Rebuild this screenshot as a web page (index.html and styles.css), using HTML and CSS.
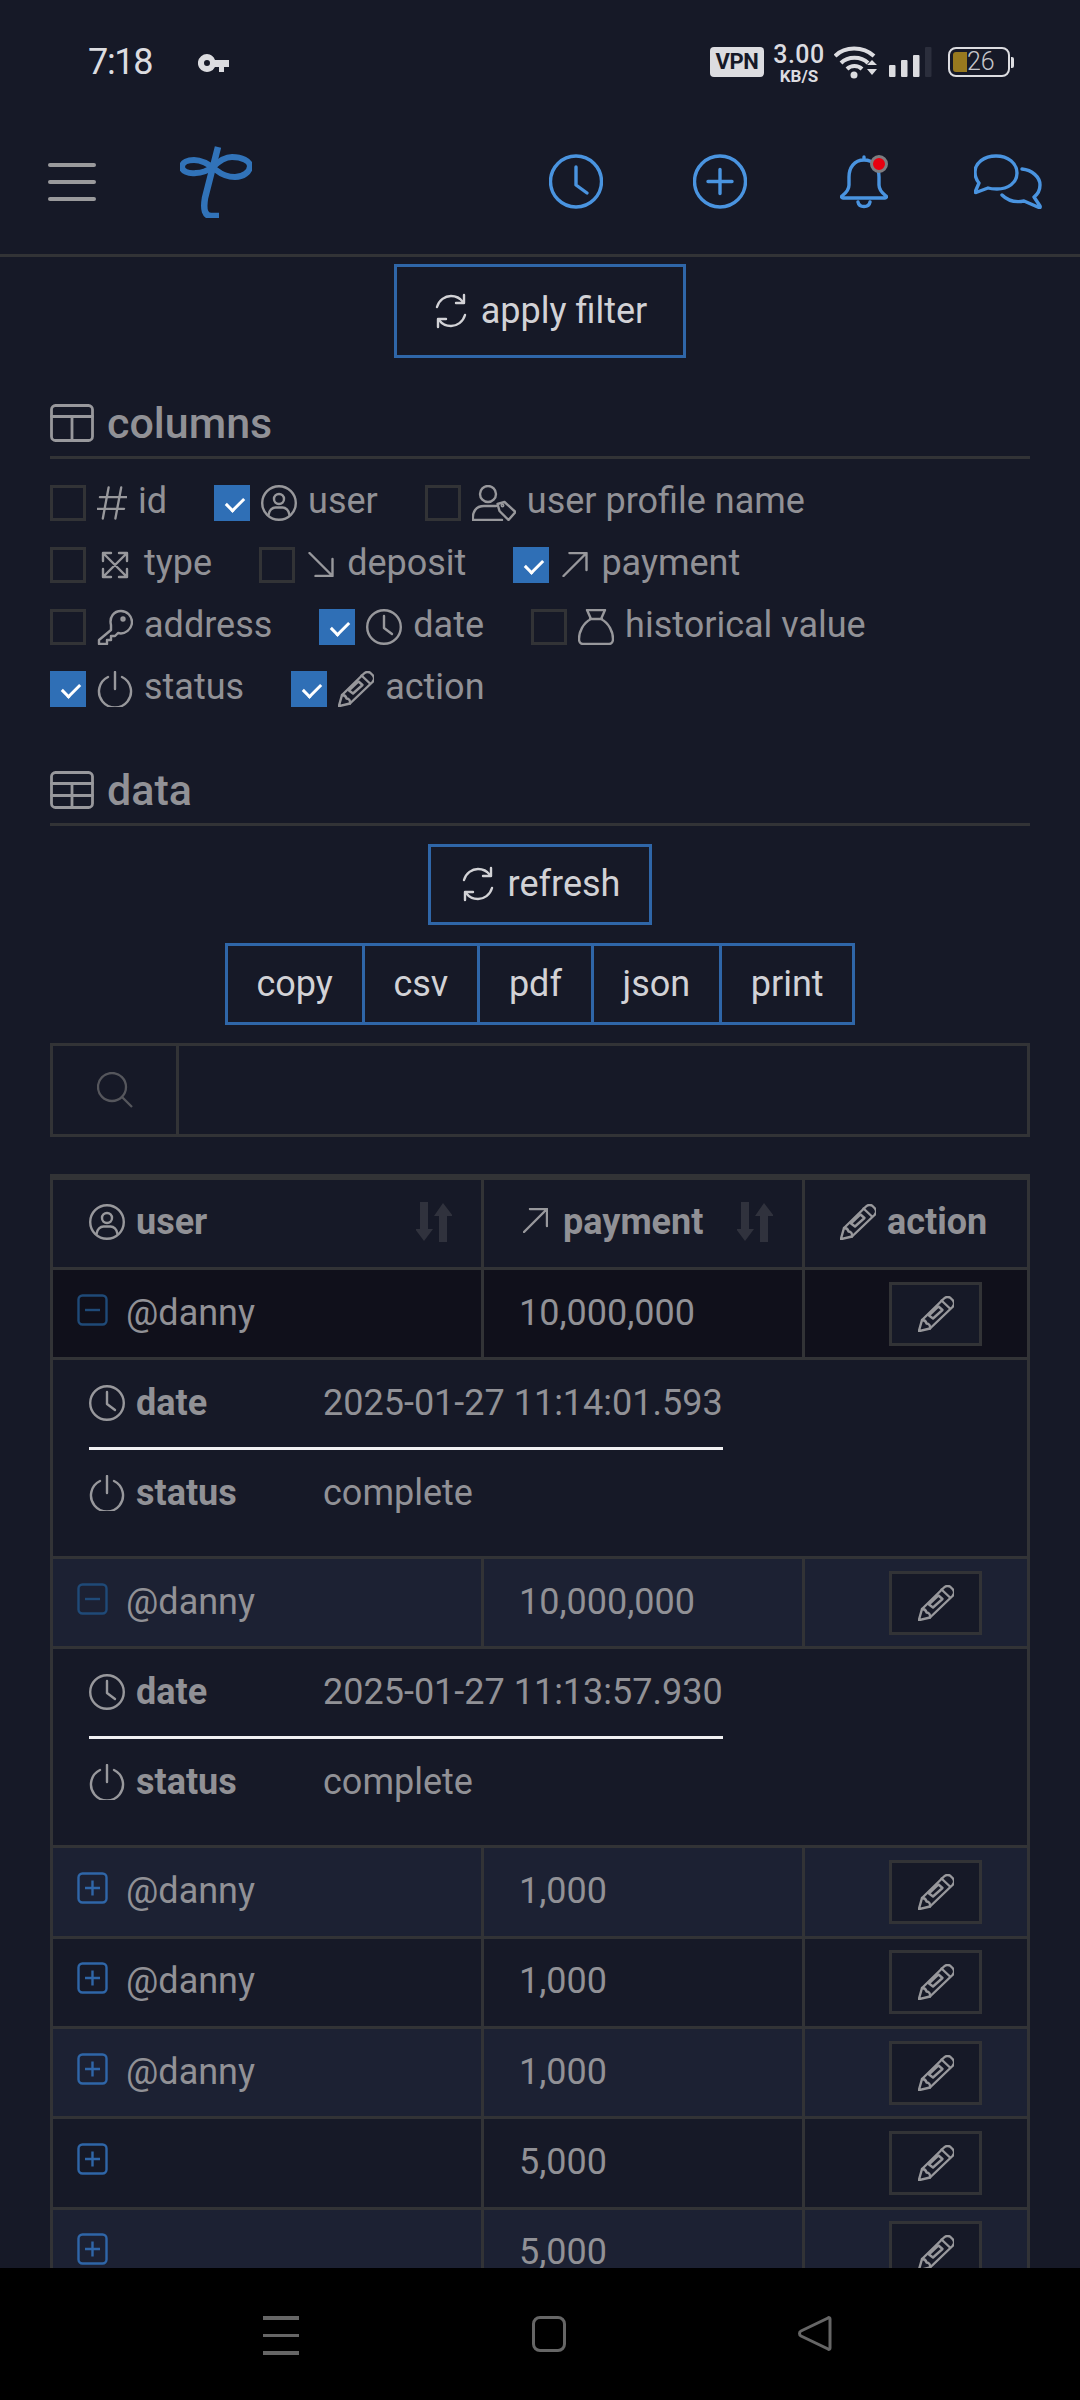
FILE: index.html
```html
<!DOCTYPE html>
<html lang="en">
<head>
<meta charset="utf-8">
<title>payments</title>
<link rel="stylesheet" href="styles.css">
</head>
<body>
<svg class="sprite" xmlns="http://www.w3.org/2000/svg">
  <symbol id="i-refresh" viewBox="0 0 36 36"><path d="M4 14C6 7 12 3 18 3c5 0 9 2 12 6M32 22c-2 7-8 11-14 11-5 0-9-2-12-6"/><path d="M31 2v8h-8M5 34v-8h8"/></symbol>
  <symbol id="i-columns" viewBox="0 0 44 38"><rect x="1.5" y="1.5" width="41" height="35" rx="4"/><path d="M1.5 12.5h41M22 12.5v24"/></symbol>
  <symbol id="i-data" viewBox="0 0 44 38"><rect x="1.5" y="1.5" width="41" height="35" rx="4"/><path d="M1.5 12.5h41M1.5 24.5h41M22 12.5v24"/></symbol>
  <symbol id="i-hash" viewBox="0 0 31 36"><path d="M12 2 6 34M25 2l-6 32M3 12h28M0 24h28"/></symbol>
  <symbol id="i-user" viewBox="0 0 36 36"><circle cx="18" cy="18" r="16.8"/><circle cx="18" cy="14" r="5"/><path d="M7.5 30c.5-5 4-7.5 7-7.5h7c3 0 6.500 2.500 7 7.500"/></symbol>
  <symbol id="i-usertag" viewBox="0 0 44 36"><circle cx="16" cy="9" r="8"/><path d="M1 35c-1-8 3-14 11-14h12M1 35h29"/><path d="M25.500 19l7-2 11 10-7 8-9-9z"/><circle cx="30.500" cy="20.500" r=".8"/></symbol>
  <symbol id="i-expand" viewBox="0 0 28 28"><path d="M2 10V2h8M18 2h8v8M26 18v8h-8M10 26H2v-8M2 2l24 24M26 2 2 26"/></symbol>
  <symbol id="i-down" viewBox="0 0 25 25"><path d="M1 1l23 23M24 7v17H7"/></symbol>
  <symbol id="i-up" viewBox="0 0 25 25"><path d="M1 24 24 1M7 1h17v17"/></symbol>
  <symbol id="i-key" viewBox="0 0 36 36"><path d="M14 21l-12 10v4h8v-4h4v-4h4l3-3c7 2 14-4 14-11 0-6-5-11-11-11-7 0-12 6-10 14z"/><circle cx="26" cy="10" r="1.500"/></symbol>
  <symbol id="i-clock" viewBox="0 0 36 36"><circle cx="18" cy="18" r="16.800"/><path d="M18 7v12l8 6"/></symbol>
  <symbol id="i-sack" viewBox="0 0 36 36"><path d="M9 1h18l-4 9c8 4 12 13 12 20 0 3-2 5-4 5H5c-2 0-4-2-4-5 0-7 4-16 12-20zM12 10h12"/></symbol>
  <symbol id="i-power" viewBox="0 0 36 36"><path d="M11 6a16 16 0 1 0 14 0M18 1v17"/></symbol>
  <symbol id="i-pencil" viewBox="0 0 36 36"><path d="M.8 35.200 4 24 26 2.500c2-2 5-2 6.500-.5L35 4.500c1.500 2 1.500 4.500-.5 6.500L12 32.500z"/><path d="M23.500 4.500 32 12.500"/><path d="M11 19.500 20.500 10.500l4 3.500-9.500 8.500z"/><path d="M4 24c3 0 4 1 4.500 3.500 2.500 0 4 2 3.500 5"/></symbol>
  <symbol id="i-sort" viewBox="0 0 36 40"><path class="sort-a" d="M4 0h8v27h5L8 39-1 27h5z"/><path class="sort-b" d="M23 40h8V14h6L27 1 18 14h5z"/></symbol>
  <symbol id="i-minus" viewBox="0 0 31 32"><rect x="1.500" y="1.500" width="28" height="29" rx="4"/><path d="M8 16h15"/></symbol>
  <symbol id="i-plus" viewBox="0 0 31 32"><rect x="1.500" y="1.500" width="28" height="29" rx="4"/><path d="M8 16h15M15.500 8.500v15"/></symbol>
</svg>

<div class="screen">
  <div class="statusbar">
    <span class="time">7:18</span>
    <svg class="key" width="32" height="20" viewBox="0 0 32 20"><path d="M9 1a9 9 0 1 0 8 13h4v5h5v-5h5V7H17A9 9 0 0 0 9 1zm0 6a3 3 0 1 1 0 6 3 3 0 0 1 0-6z" fill-rule="evenodd"/></svg>
    <div class="status-right">
      <span class="vpn">VPN</span>
      <span class="speed"><span class="speed-num">3.00</span><span class="speed-unit">KB/S</span></span>
      <svg class="wifi" width="44" height="34" viewBox="0 0 44 34"><path d="M1 11c10-10 28-10 39 0M7 18c7-7 20-7 27 0M13 24c4-4 11-4 15 0"/><circle class="solid" cx="20" cy="30" r="3.500"/><path class="solid" d="M33 20l5-5 5 5zM33 24h10l-5 6z"/></svg>
      <svg class="signal" width="44" height="30" viewBox="0 0 44 30"><rect class="bar" x="0" y="18" width="6.500" height="12" rx="1"/><rect class="bar" x="12" y="13" width="6.500" height="17" rx="1"/><rect class="bar" x="24" y="8" width="6.500" height="22" rx="1"/><rect class="bar-off" x="36" y="0" width="6.500" height="30" rx="1"/></svg>
      <div class="battery"><span class="battery-fill"></span><span class="battery-num">26</span></div>
      <span class="battery-tip"></span>
    </div>
  </div>

  <nav class="navbar">
    <div class="slot"><span class="burger"><i></i><i></i><i></i></span></div>
    <div class="slot">
      <svg class="logo" width="72" height="72" viewBox="0 0 72 72"><path d="M2 21C2 16 8 14 14 14 23 14 30 19 36 24 41 28 48 31 55 31 63 31 70 26 70 20 70 15 62 11 52 11 44 11 38 16 33 21 27 25 22 27 16 27 8 28 2 25 2 21z"/><path class="logo-stem" d="M38 1 25 52c-2 12 0 18 6 18h8"/></svg>
    </div>
    <div class="nav-spacer"></div>
    <div class="slot"><svg class="nav-ico" width="54" height="55" viewBox="0 0 54 55"><circle cx="27" cy="27.500" r="25.500"/><path d="M27 13v18l11 8"/></svg></div>
    <div class="slot"><svg class="nav-ico" width="54" height="55" viewBox="0 0 54 55"><circle cx="27" cy="27.500" r="25.500"/><path d="M15 27.500h24M27 15.500v24"/></svg></div>
    <div class="slot bell-slot">
      <svg class="nav-ico" width="48" height="54" viewBox="0 0 48 54"><path d="M24 5C14 5 9 13 9 22v8c0 5-3 8-7 11-1 1 0 2 1 2h42c1 0 2-1 1-2-4-3-7-6-7-11v-8c0-9-5-17-15-17zM24 2v3M18 47c1 6 11 6 12 0"/></svg>
      <span class="dot"></span>
    </div>
    <div class="slot"><svg class="nav-ico" width="68" height="55" viewBox="0 0 68 55"><path d="M5 29C2.500 26 1 22 1 18 1 9 10 2 22 2s21 7 21 17-9 16-20 16c-3 0-6 0-9-1L2 38.500c-1 0-1-1-.5-1.500z"/><path d="M48 15c10 1 18 8 18 16 0 5-2 9-6 12l6 9c.5 1 0 2-1 1.500L50 47c-10 2-17-1-22-6"/></svg></div>
  </nav>

  <main class="content">
    <div class="center-row">
      <button class="btn btn-filter"><svg class="ico" width="36" height="36"><use href="#i-refresh"/></svg>apply filter</button>
    </div>

    <h2 class="head head-columns"><svg class="ico" width="44" height="38"><use href="#i-columns"/></svg>columns</h2>
    <div class="checks">
      <div class="check-row">
        <label class="check"><span class="box"></span><svg class="ico" width="30" height="36"><use href="#i-hash"/></svg>id</label>
        <label class="check"><span class="box on"></span><svg class="ico" width="36" height="36"><use href="#i-user"/></svg>user</label>
        <label class="check"><span class="box"></span><svg class="ico" width="44" height="36"><use href="#i-usertag"/></svg>user profile name</label>
      </div>
      <div class="check-row">
        <label class="check"><span class="box"></span><svg class="ico" width="36" height="28"><use href="#i-expand"/></svg>type</label>
        <label class="check"><span class="box"></span><svg class="ico" width="30" height="25"><use href="#i-down"/></svg>deposit</label>
        <label class="check"><span class="box on"></span><svg class="ico" width="30" height="25"><use href="#i-up"/></svg>payment</label>
      </div>
      <div class="check-row">
        <label class="check"><span class="box"></span><svg class="ico" width="36" height="36"><use href="#i-key"/></svg>address</label>
        <label class="check"><span class="box on"></span><svg class="ico" width="36" height="36"><use href="#i-clock"/></svg>date</label>
        <label class="check"><span class="box"></span><svg class="ico" width="36" height="36"><use href="#i-sack"/></svg>historical value</label>
      </div>
      <div class="check-row">
        <label class="check"><span class="box on"></span><svg class="ico" width="36" height="36"><use href="#i-power"/></svg>status</label>
        <label class="check"><span class="box on"></span><svg class="ico" width="36" height="36"><use href="#i-pencil"/></svg>action</label>
      </div>
    </div>

    <h2 class="head"><svg class="ico" width="44" height="38"><use href="#i-data"/></svg>data</h2>
    <div class="center-row">
      <button class="btn btn-refresh"><svg class="ico" width="36" height="36"><use href="#i-refresh"/></svg>refresh</button>
    </div>
    <div class="center-row">
      <div class="btn-group">
        <button class="seg">copy</button><button class="seg">csv</button><button class="seg">pdf</button><button class="seg">json</button><button class="seg">print</button>
      </div>
    </div>

    <div class="search">
      <span class="search-ico"><svg width="36" height="36" viewBox="0 0 36 36"><circle cx="15" cy="15" r="14"/><path d="M25 25l10 10"/></svg></span>
      <span class="search-input"></span>
    </div>

    <div class="table">
      <div class="row row-head">
        <div class="cell th"><svg class="ico" width="36" height="36"><use href="#i-user"/></svg>user<svg class="sort" width="36" height="40"><use href="#i-sort"/></svg></div>
        <div class="cell th"><svg class="ico ico-arrow" width="25" height="25"><use href="#i-up"/></svg>payment<svg class="sort" width="36" height="40"><use href="#i-sort"/></svg></div>
        <div class="cell th"><svg class="ico" width="36" height="36"><use href="#i-pencil"/></svg>action</div>
      </div>

      <div class="row row-active">
        <div class="cell"><svg class="exp exp-dim" width="31" height="32"><use href="#i-minus"/></svg>@danny</div>
        <div class="cell">10,000,000</div>
        <div class="cell cell-act"><span class="edit"><svg class="ico" width="36" height="36"><use href="#i-pencil"/></svg></span></div>
      </div>
      <div class="detail">
        <div class="d-row d-first"><span class="d-label"><svg class="ico" width="36" height="36"><use href="#i-clock"/></svg>date</span><span>2025-01-27 11:14:01.593</span></div>
        <div class="d-row"><span class="d-label"><svg class="ico" width="36" height="36"><use href="#i-power"/></svg>status</span><span>complete</span></div>
      </div>

      <div class="row row-alt">
        <div class="cell"><svg class="exp exp-dim" width="31" height="32"><use href="#i-minus"/></svg>@danny</div>
        <div class="cell">10,000,000</div>
        <div class="cell cell-act"><span class="edit"><svg class="ico" width="36" height="36"><use href="#i-pencil"/></svg></span></div>
      </div>
      <div class="detail">
        <div class="d-row d-first"><span class="d-label"><svg class="ico" width="36" height="36"><use href="#i-clock"/></svg>date</span><span>2025-01-27 11:13:57.930</span></div>
        <div class="d-row"><span class="d-label"><svg class="ico" width="36" height="36"><use href="#i-power"/></svg>status</span><span>complete</span></div>
      </div>

      <div class="row row-alt">
        <div class="cell"><svg class="exp" width="31" height="32"><use href="#i-plus"/></svg>@danny</div>
        <div class="cell">1,000</div>
        <div class="cell cell-act"><span class="edit"><svg class="ico" width="36" height="36"><use href="#i-pencil"/></svg></span></div>
      </div>
      <div class="row">
        <div class="cell"><svg class="exp" width="31" height="32"><use href="#i-plus"/></svg>@danny</div>
        <div class="cell">1,000</div>
        <div class="cell cell-act"><span class="edit"><svg class="ico" width="36" height="36"><use href="#i-pencil"/></svg></span></div>
      </div>
      <div class="row row-alt">
        <div class="cell"><svg class="exp" width="31" height="32"><use href="#i-plus"/></svg>@danny</div>
        <div class="cell">1,000</div>
        <div class="cell cell-act"><span class="edit"><svg class="ico" width="36" height="36"><use href="#i-pencil"/></svg></span></div>
      </div>
      <div class="row">
        <div class="cell"><svg class="exp" width="31" height="32"><use href="#i-plus"/></svg></div>
        <div class="cell">5,000</div>
        <div class="cell cell-act"><span class="edit"><svg class="ico" width="36" height="36"><use href="#i-pencil"/></svg></span></div>
      </div>
      <div class="row row-alt">
        <div class="cell"><svg class="exp" width="31" height="32"><use href="#i-plus"/></svg></div>
        <div class="cell">5,000</div>
        <div class="cell cell-act"><span class="edit"><svg class="ico" width="36" height="36"><use href="#i-pencil"/></svg></span></div>
      </div>
    </div>
  </main>

  <footer class="sysnav">
    <span class="sys-menu"><i></i><i></i><i></i></span>
    <span class="sys-home"></span>
    <svg class="sys-back" width="34" height="35" viewBox="0 0 34 35"><path d="M32 3c0-1-1-2-2-1L3 15c-2 1-2 4 0 5l27 13c1 1 2 0 2-1z"/></svg>
  </footer>
</div>
</body>
</html>
```

FILE: styles.css
```css
* { box-sizing: border-box; }
html, body { margin: 0; padding: 0; }
body {
  width: 1080px;
  height: 2400px;
  overflow: hidden;
  background: #161927;
  font-family: Roboto, "Liberation Sans", sans-serif;
  color: #919196;
}
.sprite { display: none; }
.screen { width: 1080px; height: 2400px; display: flex; flex-direction: column; }

/* status bar */
.statusbar { height: 109px; flex: none; display: flex; align-items: flex-start; padding: 47px 66px 0 88px; position: relative; }
.time { font-size: 36px; line-height: 30px; color: #dcdce0; width: 110px; letter-spacing: -1.3px; }
.key { fill: #dcdce0; margin-top: 6px; }
.status-right { margin-left: auto; display: flex; align-items: flex-start; }
.vpn { width: 54px; height: 30px; background: #dcdce0; color: #161927; border-radius: 4px; font-size: 22px; font-weight: 700; line-height: 30px; text-align: center; letter-spacing: -0.3px; }
.speed { width: 52px; margin-left: 9px; display: flex; flex-direction: column; align-items: center; color: #dcdce0; }
.speed-num { font-size: 25px; line-height: 18px; margin-top: -1px; font-weight: 500; letter-spacing: .5px; white-space: nowrap; }
.speed-unit { font-size: 17px; line-height: 16px; font-weight: 700; margin-top: 4px; white-space: nowrap; }
.wifi { margin-left: 9px; margin-top: -2px; }
.wifi path { fill: none; stroke: #dcdce0; stroke-width: 4; }
.wifi .solid { fill: #dcdce0; stroke: none; }
.signal { margin-left: 11px; }
.bar { fill: #dcdce0; }
.bar-off { fill: #2b2e3c; }
.battery { position: relative; width: 62px; height: 30px; margin-left: 15px; border: 2px solid #dcdce0; border-radius: 8px; padding: 3px; }
.battery-fill { display: block; width: 14px; height: 100%; background: #97791f; border-radius: 3px 0 0 3px; }
.battery-num { position: absolute; left: 17px; top: 0; font-size: 25px; line-height: 26px; color: #c6c6ca; font-weight: 300; }
.battery-tip { width: 3px; height: 11px; background: #dcdce0; margin: 10px 0 0 1px; border-radius: 0 2px 2px 0; }

/* top nav */
.navbar { height: 148px; flex: none; display: flex; align-items: center; border-bottom: 3px solid #323336; }
.slot { width: 144px; flex: none; display: flex; justify-content: center; align-items: center; position: relative; }
.nav-spacer { flex: 1; }
.burger { display: flex; flex-direction: column; gap: 13px; width: 48px; }
.burger i { display: block; height: 4px; border-radius: 2px; background: #9a9a9c; }
.logo { fill: none; stroke: #3173b9; stroke-width: 6; }
.logo-stem { stroke-width: 6.500; }
.nav-ico { fill: none; stroke: #4a94e0; stroke-width: 3.4; stroke-linecap: round; stroke-linejoin: round; }
.dot { position: absolute; left: 78px; top: 0; width: 18px; height: 18px; border-radius: 50%; background: #e8000f; border: 3px solid #7d7d80; }

/* content */
.content { flex: 1; min-height: 0; overflow: hidden; padding: 7px 50px 0; }
.center-row { display: flex; justify-content: center; }
.btn, .seg { background: none; font-family: inherit; color: #d2d2d6; font-size: 36px; padding: 0; margin: 0; }
.btn { display: flex; align-items: center; justify-content: center; gap: 12px; border: 3px solid #2f66a8; }
.btn .ico { stroke: #d2d2d6; }
.btn-filter { width: 292px; height: 94px; }
.btn-refresh { width: 224px; height: 81px; margin-top: 18px; }
.btn-group { display: flex; height: 82px; margin-top: 18px; border: 3px solid #2f66a8; }
.seg { border: 0; border-left: 3px solid #2f66a8; padding: 0 28.800px; }
.seg:first-child { border-left: 0; }

.ico { fill: none; stroke: #98989c; stroke-width: 2.400; stroke-linecap: round; stroke-linejoin: round; flex: none; }
.head { display: flex; align-items: center; gap: 13px; margin: 64px 0 0; padding-bottom: 13.5px; border-bottom: 3px solid #323336; font-size: 43px; font-weight: 500; line-height: 38px; color: #919196; }
.head-columns { margin-top: 46px; }
.head .ico { stroke-width: 2.800; }
.checks { display: flex; flex-direction: column; gap: 26.300px; margin-top: 26px; }
.check-row { display: flex; gap: 47px; }
.check { display: flex; align-items: flex-start; gap: 11px; height: 36px; font-size: 36px; line-height: 32px; white-space: nowrap; }
.check .ico { align-self: center; }
.box { width: 36px; height: 36px; flex: none; border: 3px solid #323336; background: transparent; position: relative; }
.box.on { background: #2f6fb6; border-color: #2f6fb6; }
.box.on::after { content: ""; position: absolute; left: 9px; top: 9px; width: 15px; height: 8px; border-left: 3px solid #fff; border-bottom: 3px solid #fff; transform: rotate(-45deg); }

.search { display: flex; height: 94px; margin-top: 18px; border: 3px solid #323336; }
.search-ico { width: 126px; flex: none; display: flex; align-items: center; justify-content: center; border-right: 3px solid #323336; }
.search-ico svg { fill: none; stroke: #55565c; stroke-width: 2.300; }
.search-input { flex: 1; }

/* table */
.table { margin-top: 37px; border: 3px solid #323336; border-top-width: 6px; border-bottom: 0; font-size: 36px; }
.row { display: grid; grid-template-columns: 431px 321px 222px; height: 90.3px; border-bottom: 3px solid #323336; background: #161927; }
.row-head { height: 90px; }
.row-active { background: #10101b; }
.row-alt { background: #1c2133; }
.cell { display: flex; align-items: center; padding: 0 0 2px 35px; border-right: 3px solid #323336; min-width: 0; }
.cell:first-child { padding-left: 24px; }
.cell:last-child { border-right: 0; }
.th { font-weight: 700; gap: 11px; }
.th:first-child { padding-left: 36px; }
.th:nth-child(2) { padding-left: 39px; gap: 15px; }
.th:last-child { padding-left: 35px; }
.ico-arrow { margin-bottom: 4px; }
.sort { margin-left: auto; margin-right: 29px; fill: #30323d; }
.exp { fill: none; stroke: #2f66a8; stroke-width: 2.400; margin: -6px 18px 0 0; flex: none; }
.exp-dim { stroke: #1f4a78; }
.cell-act { padding: 0 0 0 84px; }
.edit { width: 93px; height: 64px; border: 3px solid #323336; background: #161927; display: flex; align-items: center; justify-content: center; }
.detail { height: 199px; padding-left: 36px; border-bottom: 3px solid #323336; background: #161927; }
.d-row { display: flex; align-items: center; width: 634px; height: 86px; }
.d-first { height: 90px; padding-bottom: 2px; border-bottom: 3px solid #f0f0f2; }
.d-label { width: 234px; display: flex; align-items: center; gap: 11px; font-weight: 700; flex: none; }

/* system nav */
.sysnav { height: 132px; flex: none; background: #000; position: relative; }
.sys-menu { position: absolute; left: 263px; top: 48px; width: 36px; display: flex; flex-direction: column; gap: 14px; }
.sys-menu i { display: block; height: 3.500px; background: #666; }
.sys-home { position: absolute; left: 532px; top: 48px; width: 34px; height: 36px; border: 3px solid #666; border-radius: 8px; }
.sys-back { position: absolute; left: 798px; top: 48px; fill: none; stroke: #666; stroke-width: 3; }
```
